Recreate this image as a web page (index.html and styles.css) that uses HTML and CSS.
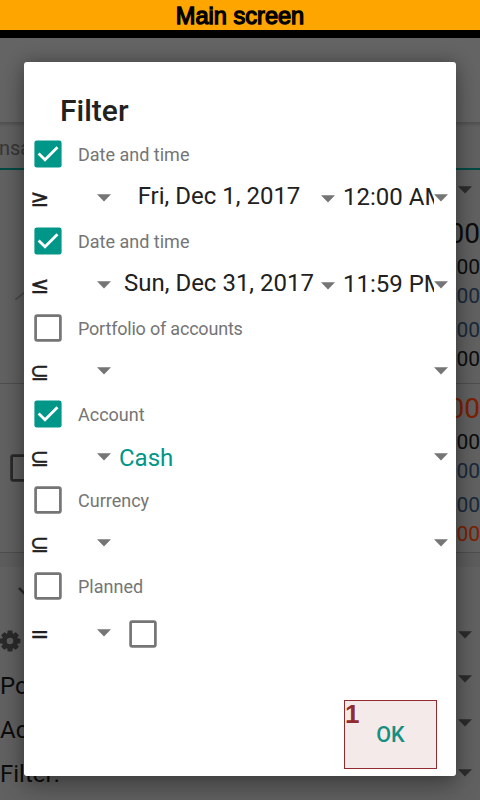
FILE: index.html
```html
<!DOCTYPE html>
<html lang="en">
<head>
<meta charset="utf-8">
<title>Main screen</title>
<link rel="stylesheet" href="styles.css">
</head>
<body>
<svg class="defs" width="0" height="0">
  <symbol id="arrow" viewBox="0 0 14 8"><path d="M0 .3H14L7 7.6Z" fill="currentColor"/></symbol>
  <symbol id="box" viewBox="0 0 28 28"><rect x="1.6" y="1.6" width="24.8" height="24.8" rx="1.6" fill="none" stroke="currentColor" stroke-width="2.7"/></symbol>
  <symbol id="checked" viewBox="0 0 28 28"><rect x=".4" y=".4" width="27.2" height="27.2" rx="2.4" fill="#009688"/><path d="M4.6 13.4L11 19.8L23.5 7.2" fill="none" stroke="#fff" stroke-width="2.8"/></symbol>
</svg>
<div class="screen">
  <header class="banner">Main screen</header>
  <div class="status"></div>
  <main class="page">
    <div class="toolbar"></div>
    <div class="tabs">nsa</div>
    <div class="picker"><svg class="arrow"><use href="#arrow"/></svg></div>
    <section class="entry">
      <svg class="slash" viewBox="0 0 10 8"><path d="M0 8L10 0" stroke="currentColor" stroke-width="1.6"/></svg>
      <div class="amounts"><b>00</b><span>00</span><span class="blue">00</span><span class="blue gap">00</span><span>00</span></div>
    </section>
    <section class="entry second">
      <svg class="box"><use href="#box"/></svg>
      <div class="amounts"><b class="red">00</b><span>00</span><span class="blue">00</span><span class="blue gap">00</span><span class="red">00</span></div>
    </section>
    <div class="spacer"></div>
    <section class="panel">
      <svg class="chevron" viewBox="0 0 16 10"><path d="M1 1L8 8L15 1" fill="none" stroke="currentColor" stroke-width="2.6"/></svg>
      <div class="option">
        <svg class="gear" viewBox="0 0 24 24"><g fill="currentColor"><circle cx="12" cy="12" r="8"/><rect x="9.4" y="1.6" width="5.2" height="20.8" rx="1.2"/><rect x="9.4" y="1.6" width="5.2" height="20.8" rx="1.2" transform="rotate(45 12 12)"/><rect x="9.4" y="1.6" width="5.2" height="20.8" rx="1.2" transform="rotate(90 12 12)"/><rect x="9.4" y="1.6" width="5.2" height="20.8" rx="1.2" transform="rotate(135 12 12)"/></g><circle cx="12" cy="12" r="3.3" fill="#5d5d5d"/></svg>
        <svg class="arrow"><use href="#arrow"/></svg>
      </div>
      <div class="option"><span>Po</span><svg class="arrow"><use href="#arrow"/></svg></div>
      <div class="option"><span>Ac</span><svg class="arrow"><use href="#arrow"/></svg></div>
      <div class="option last"><span>Filter:</span><svg class="arrow"><use href="#arrow"/></svg></div>
    </section>
  </main>
  <div class="dialog">
    <h1>Filter</h1>
    <div class="field">
      <div class="label"><svg class="box"><use href="#checked"/></svg><span>Date and time</span></div>
      <div class="rule"><span class="op">≥</span><svg class="arrow"><use href="#arrow"/></svg><span class="date">Fri, Dec 1, 2017</span><svg class="arrow low"><use href="#arrow"/></svg><span class="time">12:00 AM</span><svg class="arrow"><use href="#arrow"/></svg></div>
    </div>
    <div class="field">
      <div class="label"><svg class="box"><use href="#checked"/></svg><span>Date and time</span></div>
      <div class="rule"><span class="op">≤</span><svg class="arrow"><use href="#arrow"/></svg><span class="date">Sun, Dec 31, 2017</span><svg class="arrow low"><use href="#arrow"/></svg><span class="time">11:59 PM</span><svg class="arrow"><use href="#arrow"/></svg></div>
    </div>
    <div class="field short">
      <div class="label"><svg class="box"><use href="#box"/></svg><span class="tight">Portfolio of accounts</span></div>
      <div class="rule"><span class="op subset">⊆</span><svg class="arrow"><use href="#arrow"/></svg><span class="value"></span><svg class="arrow"><use href="#arrow"/></svg></div>
    </div>
    <div class="field short">
      <div class="label"><svg class="box"><use href="#checked"/></svg><span>Account</span></div>
      <div class="rule"><span class="op subset">⊆</span><svg class="arrow"><use href="#arrow"/></svg><span class="value">Cash</span><svg class="arrow"><use href="#arrow"/></svg></div>
    </div>
    <div class="field short">
      <div class="label"><svg class="box"><use href="#box"/></svg><span>Currency</span></div>
      <div class="rule"><span class="op subset">⊆</span><svg class="arrow"><use href="#arrow"/></svg><span class="value"></span><svg class="arrow"><use href="#arrow"/></svg></div>
    </div>
    <div class="field planned">
      <div class="label"><svg class="box"><use href="#box"/></svg><span>Planned</span></div>
      <div class="rule"><span class="op">=</span><svg class="arrow"><use href="#arrow"/></svg><svg class="box"><use href="#box"/></svg></div>
    </div>
    <div class="actions"><div class="ok">OK<span class="mark">1</span></div></div>
  </div>
</div>
</body>
</html>
```
FILE: styles.css
```css
* { box-sizing: border-box; }
body { margin: 0; font-family: Roboto, "Liberation Sans", sans-serif; }
svg { display: block; flex: none; }
.defs { position: absolute; }
.screen { position: relative; width: 480px; height: 800px; overflow: hidden; }
.banner {
  height: 30px; background: #ffa500; color: #000; text-align: center;
  font: 23.6px/32px "Liberation Sans", Arial, sans-serif;
  -webkit-text-stroke: 1.3px #000;
}
.status { height: 8px; background: #000; }
.arrow { width: 14px; height: 8px; color: #757575; }
.box { width: 28px; height: 28px; color: #757575; }

.page { height: 762px; background: #616161; color: #0d0d0d; }
.page .arrow { color: #2d2d2d; margin-right: 8px; }
.toolbar { height: 84px; background: #646464; }
.tabs {
  height: 48px; border-bottom: 2px solid #004a43; color: #373737;
  font-size: 20px; line-height: 52px; text-indent: -1px;
  background: linear-gradient(#505050, #616161 5px);
}
.picker { height: 46px; padding-top: 16px; display: flex; justify-content: flex-end; }
.entry { height: 168px; display: flex; justify-content: space-between; border-bottom: 1px solid #4e4e4e; }
.entry .slash { width: 10px; height: 8px; margin: 76px 0 0 15px; color: #484848; }
.entry .box { color: #292929; margin: 70px 0 0 10px; }
.second { height: 169px; }
.second .amounts { padding-top: 7px; }
.amounts { text-align: right; }
.amounts b, .amounts span { display: block; }
.amounts b { font-weight: 400; font-size: 28px; line-height: 36px; margin-bottom: 1px; }
.amounts span { font-size: 21px; line-height: 29px; }
.amounts .gap { margin-top: 5px; }
.amounts .blue { color: #19293a; }
.amounts .red { color: #7c2000; }
.spacer { height: 14px; background: #5d5d5d; }
.panel { background: #616161; height: 233px; padding-top: 20px; }
.chevron { width: 16px; height: 10px; margin: 0 0 0 18px; color: #2c2c2c; }
.option { height: 44px; display: flex; justify-content: space-between; align-items: center; font-size: 24px; }
.option .arrow { margin-bottom: 15px; }
.option:first-of-type { margin-top: 23px; }
.gear { width: 24px; height: 24px; margin-left: -2px; color: #2a2a2a; margin-bottom: 3px; }
.option.last .arrow { margin-bottom: 2px; }

.dialog {
  position: absolute; left: 24px; top: 62px; width: 432px; height: 714px;
  background: #fff; border-radius: 3px; color: #212121;
  box-shadow: 0 14px 24px rgba(0,0,0,.22), 0 0 18px rgba(0,0,0,.3);
}
h1 { margin: 0; height: 70px; padding-left: 36px; font-size: 30px; font-weight: 500; line-height: 98px; }
.field { height: 87px; display: flex; flex-direction: column; }
.short { height: 86px; }
.planned { height: 96px; }
.label { height: 44px; display: flex; align-items: center; padding-left: 10px; gap: 16px; font-size: 18px; color: #757575; }
.tight { letter-spacing: -.2px; }
.rule { flex: 1; display: flex; align-items: center; padding: 0 8px 0 5px; font-size: 24px; white-space: nowrap; }
.op { width: 68px; padding-left: 1px; font-family: "DejaVu Sans", sans-serif; font-size: 23px; line-height: 28px; -webkit-text-stroke: .4px #212121; }
.subset { padding-top: 2px; }
.date { width: 210px; padding: 0 0 3px 6px; text-align: center; }
.low { margin-top: 2px; }
.time { width: 99px; padding: 0 0 1px 8px; overflow: hidden; }
.value { flex: 1; padding: 1px 0 0 8px; color: #009688; }
.planned .rule .box { margin-left: 18px; }
.planned .rule .arrow { margin-bottom: 3px; }
.actions { display: flex; justify-content: flex-end; padding: 40px 19px 0 0; }
.ok {
  position: relative; width: 93px; height: 69px; border: 1px solid #922b31; background: #f4eae9;
  color: #148f82; font-size: 21.5px; font-weight: 500; line-height: 68px; text-align: center;
}
.mark { position: absolute; left: 0; top: 0; font: 700 26px/27px "Liberation Sans", Arial, sans-serif; color: #922b31; }
```
